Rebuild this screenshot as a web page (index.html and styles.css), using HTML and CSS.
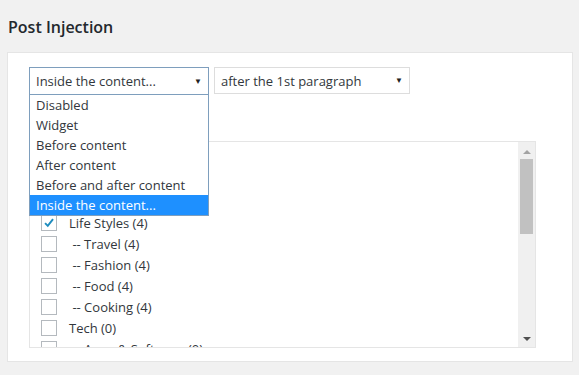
FILE: index.html
```html
<!DOCTYPE html>
<html>
<head>
<meta charset="utf-8">
<link rel="stylesheet" href="styles.css">
</head>
<body>
<h2 class="title">Post Injection</h2>
<div class="panel">
  <div class="selects">
    <div class="select-wrap">
      <div class="select focused"><span>Inside the content...</span><span class="arrow">&#9660;</span></div>
      <ul class="dropdown">
        <li>Disabled</li>
        <li>Widget</li>
        <li>Before content</li>
        <li>After content</li>
        <li>Before and after content</li>
        <li class="sel">Inside the content...</li>
      </ul>
    </div>
    <div class="select second"><span>after the 1st paragraph</span><span class="arrow">&#9660;</span></div>
  </div>
  <div class="listbox">
    <ul class="list">
      <li><span class="cb"></span></li>
      <li><span class="cb"></span></li>
      <li><span class="cb"></span></li>
      <li><span class="cb checked"><svg viewBox="0 0 16 16" width="16" height="16"><path d="M3.5 8.2 L6.6 11.3 L12.6 3.6" fill="none" stroke="#1e8cbe" stroke-width="2.2"/></svg></span>Life Styles (4)</li>
      <li><span class="cb"></span>&nbsp;-- Travel (4)</li>
      <li><span class="cb"></span>&nbsp;-- Fashion (4)</li>
      <li><span class="cb"></span>&nbsp;-- Food (4)</li>
      <li><span class="cb"></span>&nbsp;-- Cooking (4)</li>
      <li><span class="cb"></span>Tech (0)</li>
      <li><span class="cb"></span>&nbsp;-- Apps &amp; Software (0)</li>
    </ul>
    <div class="scrollbar">
      <span class="up"></span>
      <span class="thumb"></span>
      <span class="track"></span>
      <span class="down"></span>
    </div>
  </div>
</div>
</body>
</html>
```
FILE: styles.css
```css
* { box-sizing: border-box; }
html, body { margin: 0; padding: 0; }
body {
  background: #f1f1f1;
  font-family: "Open Sans", "Noto Sans", sans-serif;
  color: #444;
  font-size: 13px;
  width: 579px;
  height: 375px;
  overflow: hidden;
}
.title {
  margin: 0;
  padding: 16px 0 0 8px;
  height: 52px;
  font-size: 16px;
  font-weight: 600;
  color: #23282d;
  line-height: 22px;
}
.panel {
  margin-left: 7px;
  width: 566px;
  height: 310px;
  background: #fff;
  border: 1px solid #e5e5e5;
  padding: 14px 0 0 21px;
}
.selects {
  display: flex;
  gap: 5px;
  height: 28px;
}
.select-wrap { position: relative; }
.select {
  height: 28px;
  width: 180px;
  border: 1px solid #ddd;
  display: flex;
  align-items: center;
  justify-content: space-between;
  padding: 0 6px 0 6px;
  color: #32373c;
  font-size: 13px;
}
.select.focused { border-color: #7e9ebd; }
.select.second { width: 196px; height: 27px; padding-left: 6px; }
.arrow { font-size: 8px; color: #222; margin-top: -2px; }
.dropdown {
  position: absolute;
  left: 0;
  top: 28px;
  width: 180px;
  margin: 0;
  padding: 0;
  list-style: none;
  background: #fff;
  border: 1px solid #7e9ebd;
  border-top: none;
  z-index: 5;
}
.dropdown li {
  height: 20px;
  line-height: 20px;
  padding-left: 6px;
  color: #32373c;
  font-size: 13px;
  white-space: nowrap;
}
.dropdown li.sel { background: #1e90ff; color: #fff; }
.listbox {
  margin-top: 46px;
  width: 507px;
  height: 207px;
  border: 1px solid #e5e5e5;
  display: flex;
}
.list {
  flex: 1;
  margin: 0;
  padding: 7px 0 0 11px;
  list-style: none;
  overflow: hidden;
}
.list li {
  height: 21px;
  display: flex;
  align-items: center;
  gap: 12px;
  color: #32373c;
  white-space: nowrap;
}
.cb {
  width: 16px;
  height: 16px;
  border: 1px solid #b4b9be;
  background: #fff;
  flex: none;
  display: flex;
  align-items: center;
  justify-content: center;
}
.cb svg { display: block; }
.scrollbar {
  width: 17px;
  background: #f0f0f0;
  display: flex;
  flex-direction: column;
  align-items: center;
}
.up {
  margin-top: 8px;
  width: 0; height: 0;
  border-left: 4px solid transparent;
  border-right: 4px solid transparent;
  border-bottom: 4px solid #a3a3a3;
}
.thumb {
  margin-top: 5px;
  width: 13px;
  height: 75px;
  background: #c1c1c1;
}
.track { flex: 1; }
.down {
  margin-bottom: 6px;
  width: 0; height: 0;
  border-left: 4px solid transparent;
  border-right: 4px solid transparent;
  border-top: 4px solid #505050;
}
```
